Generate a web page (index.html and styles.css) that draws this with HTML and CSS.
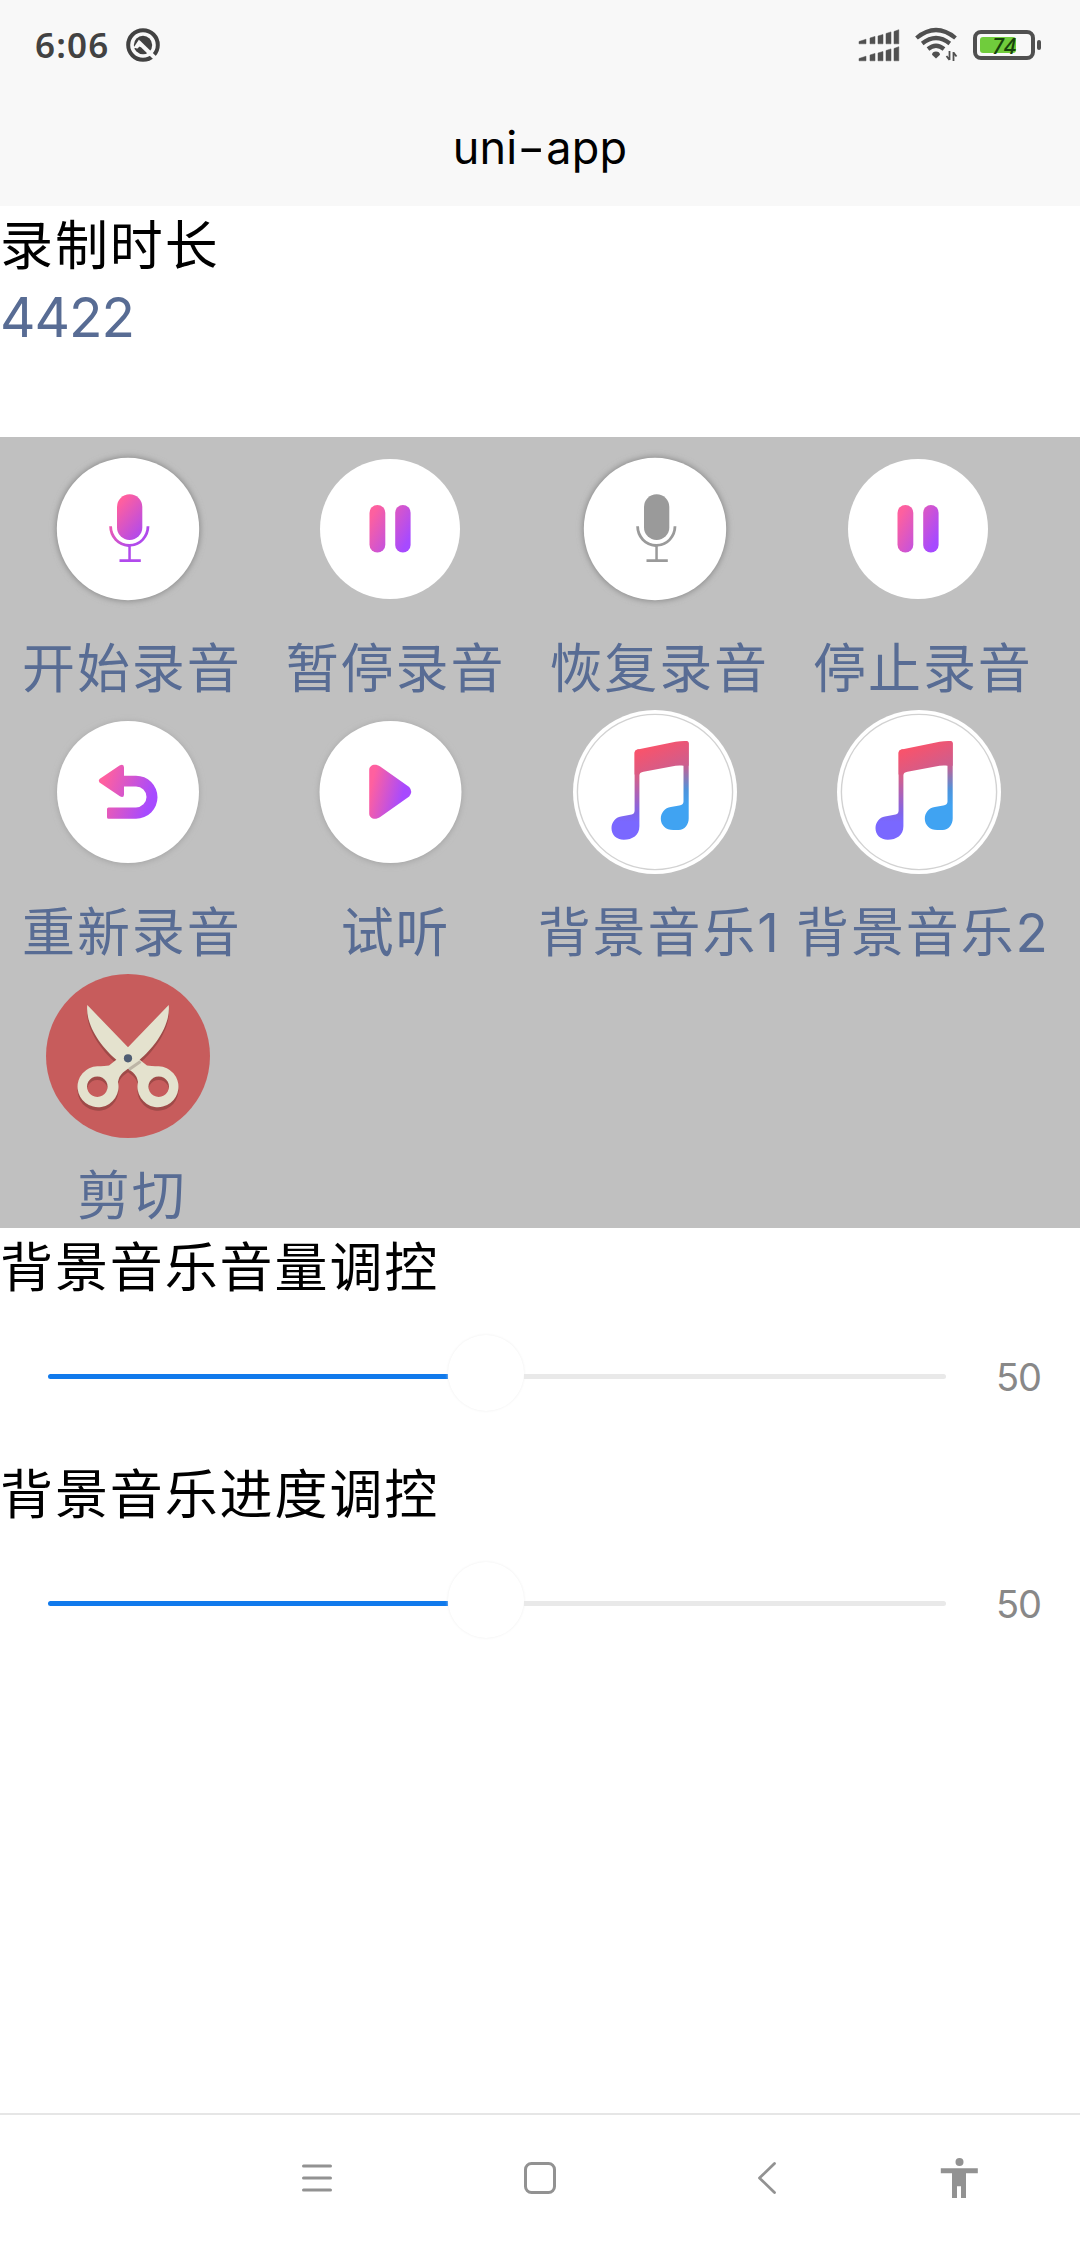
FILE: index.html
```html
<!DOCTYPE html>
<html lang="zh-CN">
<head>
<meta charset="utf-8">
<title>uni-app</title>
<link rel="stylesheet" href="styles.css">
</head>
<body>
<svg class="defs" width="0" height="0" aria-hidden="true">
  <defs>
    <linearGradient id="mic-fill" gradientUnits="userSpaceOnUse" x1="70" y1="60" x2="98" y2="84"><stop offset="0" stop-color="#ff5f9f"/><stop offset="1" stop-color="#b14aec"/></linearGradient>
    <linearGradient id="pause-fill" gradientUnits="userSpaceOnUse" x1="62" y1="70" x2="100" y2="92"><stop offset="0" stop-color="#fd609f"/><stop offset="1" stop-color="#a74aff"/></linearGradient>
    <linearGradient id="undo-fill" gradientUnits="userSpaceOnUse" x1="56" y1="74" x2="104" y2="92"><stop offset="0" stop-color="#ff609f"/><stop offset="1" stop-color="#a74aff"/></linearGradient>
    <linearGradient id="play-fill" gradientUnits="userSpaceOnUse" x1="62" y1="76" x2="94" y2="84"><stop offset="0" stop-color="#ff609f"/><stop offset="1" stop-color="#a74aff"/></linearGradient>
    <linearGradient id="note-left" gradientUnits="userSpaceOnUse" x1="62" y1="50" x2="60" y2="112"><stop offset="0" stop-color="#f8536c"/><stop offset=".3" stop-color="#d0608f"/><stop offset=".85" stop-color="#8065e8"/><stop offset="1" stop-color="#7a68ff"/></linearGradient>
    <linearGradient id="note-right" gradientUnits="userSpaceOnUse" x1="0" y1="32" x2="0" y2="96"><stop offset="0" stop-color="#e9577d"/><stop offset=".4" stop-color="#bd6498"/><stop offset=".75" stop-color="#4d94dc"/><stop offset="1" stop-color="#40a3f2"/></linearGradient>
    <linearGradient id="note-beam" gradientUnits="userSpaceOnUse" x1="78" y1="36" x2="92" y2="68"><stop offset="0" stop-color="#f8536c"/><stop offset="1" stop-color="#c85f92"/></linearGradient>
    <filter id="soft" x="-20%" y="-20%" width="140%" height="140%"><feGaussianBlur stdDeviation="3"/></filter>
    <g id="mic">
      <rect x="71" y="47.3" width="25.3" height="45.7" rx="12.6"/>
      <path d="M63.2 79.3h2.8a17.3 17.8 0 0 0 34.6 0h2.8a20.1 20.6 0 0 1-18.6 20.3v12.6h10v2.7h-21.3v-2.7h8.8V99.9A20.1 20.6 0 0 1 63.2 79.3z"/>
    </g>
    <g id="pause" fill="url(#pause-fill)">
      <rect x="60.5" y="58" width="15.8" height="47.6" rx="7.9"/>
      <rect x="86.2" y="58" width="15.4" height="47.6" rx="7.7"/>
    </g>
    <g id="music">
      <circle cx="82" cy="82" r="82" fill="#fff"/>
      <circle cx="82" cy="82" r="77.6" fill="none" stroke="#d2d2d2" stroke-width="1.4"/>
      <path fill="url(#note-left)" d="M61.6 43q0-3 3-3.5l1.8-.3v77c0 9-7 13.500-15.6 13.500-7.5 0-12.3-5-12.3-11.5 0-6 4-11 9.5-11.8l10.6-2q3-.6 3-4z"/>
      <path fill="url(#note-right)" d="M110.5 32l3-.6q2.2 0 2.2 2.2v75c0 6-4 11.4-10 11.4h-5.5c-7.5 0-12.4-5-12.4-11.3 0-6 4-11 10-11.8l8.5-1.3q4.2-.7 4.2-4z"/>
      <path fill="url(#note-beam)" d="M61.6 43q0-2.8 3-3.5l38-7.8q6-1 11-.7 2.1 0 2.1 2.2v22.5h-5.2c-4-.5-8-.2-12 .8l-28 5.3q-3.6.6-4.1 2.7h-4.8z"/>
    </g>
    <g id="shears" fill-rule="evenodd">
      <path d="M41.3 31L82 73.300 94 86 101 91.500Q105 92.200 112.700 92.200A20.500 20.500 0 1 1 92 108Q91 102 87 98.500L70.700 86C56 74 39 51 41.300 31zM112.700 102.400a10.300 10.300 0 1 0 .01 0z"/>
      <path d="M122.700 31L82 73.300 70 86 63 91.500Q59 92.200 51.300 92.200A20.500 20.500 0 1 0 72 108Q73 102 77 98.500L93.300 86C108 74 125 51 122.700 31zM51.300 102.400a10.300 10.300 0 1 0 .01 0z"/>
    </g>
  </defs>
</svg>

<header class="top">
  <div class="status">
    <span class="time">6:06</span>
    <svg class="q-icon" width="34" height="34" viewBox="0 0 34 34">
      <circle cx="17" cy="17" r="14.8" fill="none" stroke="#424242" stroke-width="4"/>
      <circle cx="17" cy="17" r="9.2" fill="#424242"/>
      <path d="M12.500 14L30 31" stroke="#f8f8f8" stroke-width="4"/>
      <path d="M7 20.500l6-9 3.500 6-4.500 3.500-2.500-1z" fill="#f8f8f8"/>
      <path d="M10 22l3.500-3.500 3 3.500-2 3z" fill="#424242"/>
    </svg>
    <div class="indicators">
      <svg width="42" height="34" viewBox="0 0 42 34" fill="#505050">
        <g id="bars"><path d="M1 13.500l7-2.300v4.600H1zM12 10l5-1.600v7.400h-5zM20 8l5-1.500v9.300h-5zM28 5.500l5-1.600v11.900h-5zM36 3.500l4.800-1.800v14.100H36z" stroke="#505050" stroke-width=".5" stroke-linejoin="round"/></g>
        <use href="#bars" y="17"/>
      </svg>
      <svg class="wifi" width="44" height="36" viewBox="0 0 44 36" fill="none" stroke="#505050" stroke-width="4.2">
        <path d="M2.500 11Q22 -5 41.500 11M8.200 16.500Q22 5.500 35.800 16.500M14 22Q22 15.500 30 22"/>
        <path d="M22 24.500a4.200 3.600 0 0 1 4 3.200L22 31.500l-4-3.800a4.200 3.600 0 0 1 4-3.200z" fill="#505050" stroke="none"/>
        <path d="M35.500 24v9M35.500 33l-3-4M39.500 34v-9M39.500 25.500l3 4" stroke-width="1.8"/>
      </svg>
      <div class="battery"><div class="battery-body"><div class="charge"></div><span class="percent">74</span></div><div class="battery-tip"></div></div>
    </div>
  </div>
  <h1 class="title">uni<span class="dash">-</span>app</h1>
</header>

<main class="page">
  <div class="heading">录制时长</div>
  <div class="duration">4422</div>

  <section class="controls">
    <div class="control">
      <svg class="icon" viewBox="0 0 164 164"><circle cx="82" cy="82" r="72" fill="#888" filter="url(#soft)"/><circle cx="82" cy="82" r="71.2" fill="#fff"/><use href="#mic" fill="url(#mic-fill)"/></svg>
      <span class="label">开始录音</span>
    </div>
    <div class="control">
      <svg class="icon" viewBox="0 0 164 164"><circle cx="81" cy="82" r="70" fill="#fff"/><use href="#pause"/></svg>
      <span class="label">暂停录音</span>
    </div>
    <div class="control">
      <svg class="icon" viewBox="0 0 164 164"><circle cx="82" cy="82" r="72" fill="#888" filter="url(#soft)"/><circle cx="82" cy="82" r="71.2" fill="#fff"/><use href="#mic" fill="#9a9a9a"/></svg>
      <span class="label">恢复录音</span>
    </div>
    <div class="control">
      <svg class="icon" viewBox="0 0 164 164"><circle cx="81" cy="82" r="70" fill="#fff"/><use href="#pause"/></svg>
      <span class="label">停止录音</span>
    </div>
    <div class="control">
      <svg class="icon" viewBox="0 0 164 164"><circle cx="82" cy="83" r="71" fill="#a2a2a2" filter="url(#soft)"/><circle cx="82" cy="82" r="71" fill="#fff"/>
        <path fill="url(#undo-fill)" d="M53.500 69l20-13.600q4.500-2 4.500 2V65.700h12a21.500 21.500 0 0 1 0 43H62.500q-1.500 0-1.500-1.500v-8.300q0-1.500 1.500-1.500H90a10.500 10.500 0 0 0 0-21H78v8q0 4-4.500 1.700l-20-13.600q-1.500-1.700 0-3.500z"/></svg>
      <span class="label">重新录音</span>
    </div>
    <div class="control">
      <svg class="icon" viewBox="0 0 164 164"><circle cx="81.500" cy="83" r="71" fill="#a2a2a2" filter="url(#soft)"/><circle cx="81.500" cy="82" r="71" fill="#fff"/>
        <path fill="url(#play-fill)" d="M60.200 60c0-5 6-7 11-3.500l29 20.500q4 4.500 0 9.500l-29 20.500c-5 3.500-11 1.500-11-3.500z"/></svg>
      <span class="label">试听</span>
    </div>
    <div class="control">
      <svg class="icon" viewBox="0 0 164 164"><use href="#music"/></svg>
      <span class="label">背景音乐1</span>
    </div>
    <div class="control">
      <svg class="icon" viewBox="0 0 164 164"><use href="#music"/></svg>
      <span class="label">背景音乐2</span>
    </div>
    <div class="control">
      <svg class="icon" viewBox="0 0 164 164">
        <circle cx="82" cy="82" r="82" fill="#c75c5c"/>
        <use href="#shears" y="3.500" fill="#9f4a48"/>
        <use href="#shears" fill="#e4e2ce"/>
        <path d="M83 95.500L94.500 87.500" stroke="#bcb5a6" stroke-width="3"/>
        <circle cx="82" cy="84.300" r="4.100" fill="#4f5d73"/>
      </svg>
      <span class="label">剪切</span>
    </div>
  </section>

  <section class="setting">
    <div class="heading">背景音乐音量调控</div>
    <div class="slider"><div class="fill"></div><div class="thumb"></div><div class="rest"></div><span class="value">50</span></div>
  </section>
  <section class="setting">
    <div class="heading">背景音乐进度调控</div>
    <div class="slider"><div class="fill"></div><div class="thumb"></div><div class="rest"></div><span class="value">50</span></div>
  </section>
</main>

<nav class="nav">
  <svg class="nav-menu" width="30" height="34" viewBox="0 0 30 34" fill="none" stroke="#929292" stroke-width="3" stroke-linecap="round"><path d="M1.500 5h27M1.500 17h27M1.500 29h27"/></svg>
  <svg class="nav-home" width="34" height="34" viewBox="0 0 34 34" fill="none" stroke="#929292" stroke-width="3"><rect x="2.500" y="2.500" width="29" height="29" rx="6"/></svg>
  <svg class="nav-back" width="20" height="34" viewBox="0 0 20 34" fill="none" stroke="#929292" stroke-width="2.8" stroke-linecap="round" stroke-linejoin="round"><path d="M17.500 2.500L2.500 17l15 14.500"/></svg>
  <svg class="nav-access" width="38" height="42" viewBox="0 0 38 42" fill="#929292"><circle cx="19.500" cy="5" r="4"/><path d="M.8 11.200h37v5H26V41h-5V29.200h-4V41h-5V16.200H.8z"/></svg>
</nav>
</body>
</html>
```
FILE: styles.css
```css
* { box-sizing: border-box; }

body {
  margin: 0;
  width: 1080px;
  height: 2244px;
  display: flex;
  flex-direction: column;
  background: #fff;
  color: #000;
  font-family: Inter, "Noto Sans CJK SC", sans-serif;
}

svg { display: block; flex: none; }
.defs { position: absolute; }

.top { height: 206px; background: #f8f8f8; }

.status {
  display: flex;
  align-items: center;
  height: 90px;
  padding: 0 39px 0 35px;
}

.time {
  width: 91px;
  font: 600 35px/40px "Noto Sans", sans-serif;
  letter-spacing: 1.2px;
  color: #424242;
}

.indicators { display: flex; align-items: center; margin-left: auto; }
.wifi { margin-left: 14px; }

.battery { display: flex; align-items: center; margin-left: 15px; }
.battery-body {
  position: relative;
  width: 62px;
  height: 30px;
  padding: 3px;
  border: 4px solid #505050;
  border-radius: 8px;
}
.charge { width: 36px; height: 16px; border-radius: 3px; background: #70cc3c; }
.percent {
  position: absolute;
  left: 15px;
  top: 0;
  font: italic 500 22px/22px "Noto Sans", sans-serif;
  color: #17420b;
}
.battery-tip { width: 4px; height: 10px; margin-left: 2px; border-radius: 2px; background: #505050; }

.title {
  margin: 0;
  padding-top: 30px;
  font-size: 45px;
  font-weight: 400;
  line-height: 56px;
  letter-spacing: 0.2px;
  text-align: center;
}
.dash { display: inline-block; margin: 0 4px; transform: scaleX(1.35); }

.page { flex: 1; }

.heading {
  height: 73px;
  font: 400 53px/72px "Noto Sans CJK SC", sans-serif;
  letter-spacing: 1.9px;
}

.duration {
  height: 158px;
  padding-top: 2px;
  font-size: 55px;
  line-height: 73px;
  letter-spacing: -1px;
  color: #586c94;
}

.controls {
  display: grid;
  grid-template-columns: repeat(4, 263.7px);
  grid-auto-rows: 263.7px;
  background: #c0c0c0;
}

.control { display: flex; flex-direction: column; padding-top: 9.6px; }
.icon { width: 164px; height: 164px; margin-left: 45.5px; overflow: visible; }

.label {
  margin-top: 22.5px;
  font-size: 53px;
  line-height: 72px;
  letter-spacing: 1.9px;
  text-align: center;
  white-space: nowrap;
  color: #586c94;
}

.setting { height: 227px; }

.slider { display: flex; align-items: center; height: 150px; padding-left: 48px; }
.fill { width: 400px; height: 5px; border-radius: 3px 0 0 3px; background: #117aec; }
.thumb { width: 76px; height: 76px; margin-top: -7px; border-radius: 50%; background: #fff; box-shadow: 0 0 3px #eee; }
.rest { width: 422px; height: 5px; border-radius: 0 3px 3px 0; background: #e9e9e9; }
.value { margin: 2px 0 0 50px; font-size: 38px; color: #888; letter-spacing: -1px; }

.nav {
  display: flex;
  align-items: center;
  height: 131px;
  padding: 0 0 3px 302px;
  border-top: 2px solid #e6e6e6;
}
.nav-home { margin-left: 191px; }
.nav-back { margin-left: 200px; }
.nav-access { margin-left: 163px; }
```
